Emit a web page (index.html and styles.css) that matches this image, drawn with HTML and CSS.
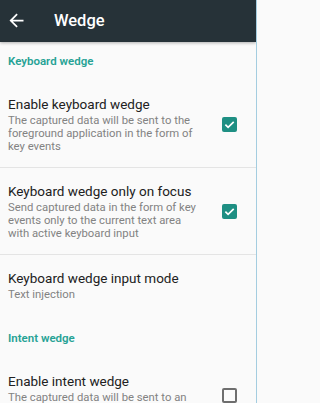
FILE: index.html
```html
<!DOCTYPE html>
<html lang="en">
<head>
<meta charset="utf-8">
<title>Wedge</title>
<link rel="stylesheet" href="styles.css">
</head>
<body>
<div class="screen">
  <header class="appbar">
    <svg class="back" viewBox="0 0 24 24" aria-hidden="true"><path d="M20 11H7.83l5.59-5.59L12 4l-8 8 8 8 1.41-1.41L7.83 13H20v-2z"/></svg>
    <h1 class="appbar-title">Wedge</h1>
  </header>
  <main class="list">
    <div class="category category-first">Keyboard wedge</div>
    <div class="pref">
      <div class="pref-text">
        <div class="pref-title">Enable keyboard wedge</div>
        <div class="pref-summary">The captured data will be sent to the foreground application in the form of key events</div>
      </div>
      <span class="check checked"><svg viewBox="0 0 16 16" aria-hidden="true"><path d="M3.6 8.2l2.9 2.9 6-6" /></svg></span>
    </div>
    <div class="pref">
      <div class="pref-text">
        <div class="pref-title">Keyboard wedge only on focus</div>
        <div class="pref-summary">Send captured data in the form of key events only to the current text area with active keyboard input</div>
      </div>
      <span class="check checked"><svg viewBox="0 0 16 16" aria-hidden="true"><path d="M3.6 8.2l2.9 2.9 6-6" /></svg></span>
    </div>
    <div class="pref pref-last">
      <div class="pref-text">
        <div class="pref-title">Keyboard wedge input mode</div>
        <div class="pref-summary">Text injection</div>
      </div>
    </div>
    <div class="category">Intent wedge</div>
    <div class="pref">
      <div class="pref-text">
        <div class="pref-title">Enable intent wedge</div>
        <div class="pref-summary">The captured data will be sent to an application in the form of an intent</div>
      </div>
      <span class="check"></span>
    </div>
  </main>
</div>
</body>
</html>
```

FILE: styles.css
```css
html, body {
  margin: 0;
  padding: 0;
  background: #fafafa;
}
body {
  font-family: Roboto, "Noto Sans", "Liberation Sans", sans-serif;
  overflow: hidden;
}
.screen {
  width: 256px;
  height: 403px;
  border-right: 1px solid #a4cde0;
  background: #fafafa;
  overflow: hidden;
}
.appbar {
  height: 42px;
  background: #263238;
  display: flex;
  align-items: center;
  padding-left: 6px;
  box-shadow: 0 1px 3px rgba(0,0,0,0.3);
  position: relative;
}
.back {
  width: 21px;
  height: 21px;
  fill: #ffffff;
  margin-top: -1px;
}
.appbar-title {
  margin: 0 0 0 27px;
  font-size: 16.5px;
  font-weight: 500;
  color: #ffffff;
  line-height: 20px;
}
.category {
  padding: 16px 8px 13px;
  font-size: 11.5px;
  line-height: 14px;
  font-weight: 600;
  color: #26a295;
}
.category-first {
  padding-top: 12px;
}
.pref {
  display: flex;
  align-items: center;
  padding: 15px 19px 14px 8px;
  border-bottom: 1px solid #e4e4e4;
}
.pref-last {
  border-bottom: none;
}
.pref-text {
  flex: 1;
  min-width: 0;
  padding-right: 22px;
}
.pref-title {
  font-size: 13.5px;
  line-height: 16px;
  color: #212121;
}
.pref-summary {
  margin-top: 2px;
  font-size: 11.3px;
  line-height: 13px;
  color: #828282;
}
.check {
  flex: none;
  width: 15px;
  height: 15px;
  box-sizing: border-box;
  border: 2px solid #6e6e6e;
  border-radius: 2px;
  display: flex;
  align-items: center;
  justify-content: center;
}
.check.checked {
  border: none;
  background: #1e8f83;
}
.check svg {
  width: 15px;
  height: 15px;
  fill: none;
  stroke: #ffffff;
  stroke-width: 1.8;
}
```
